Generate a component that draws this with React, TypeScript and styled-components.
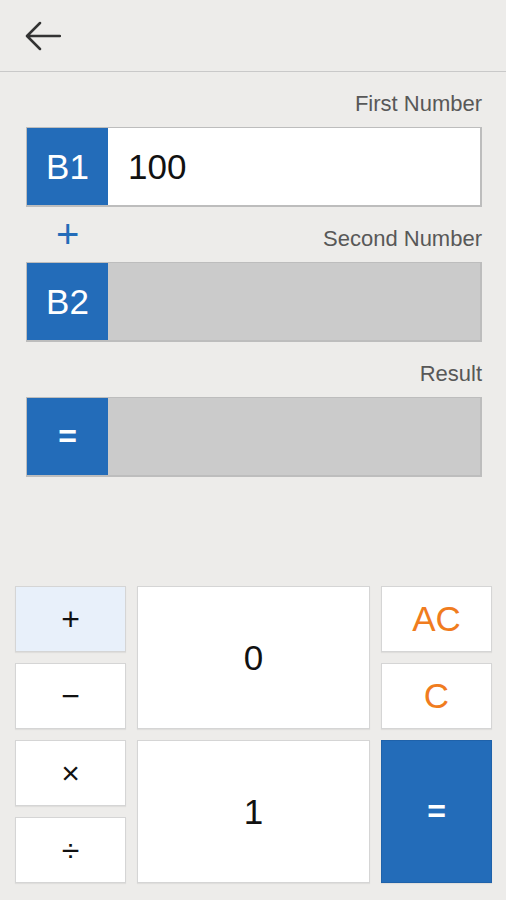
import React from "react";
import styled, { createGlobalStyle } from "styled-components";

const Global = createGlobalStyle`
  html, body { margin: 0; padding: 0; }
  body {
    background: #edecea;
    font-family: "Liberation Sans", Arial, sans-serif;
  }
  * { box-sizing: border-box; }
`;

const BLUE = "#236cb9";

const Page = styled.div`
  display: flex;
  flex-direction: column;
  min-height: 900px;
  background: #edecea;
`;

const Header = styled.header`
  height: 72px;
  border-bottom: 1px solid #c9c9c9;
  display: flex;
  align-items: center;
  padding-left: 25px;
`;

const BackButton = styled.button`
  border: 0;
  background: transparent;
  padding: 0;
  margin: 0;
  width: 36px;
  height: 30px;
  display: flex;
  cursor: pointer;
`;

const Form = styled.section`
  padding: 0 24px 0 26px;
  display: flex;
  flex-direction: column;
`;

const LabelRow = styled.div`
  height: 43px;
  margin-bottom: 12px;
  display: flex;
  align-items: flex-end;
  justify-content: space-between;
`;

const Label = styled.span`
  margin-left: auto;
  font-size: 22px;
  line-height: 23px;
  color: #585858;
`;

const OpMark = styled.span`
  font-size: 40px;
  line-height: 40px;
  color: ${BLUE};
  margin-left: 30px;
  margin-bottom: -4px;
`;

const Field = styled.div<{ $filled?: boolean }>`
  height: 80px;
  display: flex;
  border: 1px solid #bdbdbd;
  border-right-width: 2px;
  border-bottom-width: 2px;
  background: ${(p) => (p.$filled ? "#ffffff" : "#cbcbcb")};
`;

const Tag = styled.div<{ $bold?: boolean }>`
  width: 81px;
  flex: none;
  background: ${BLUE};
  color: #ffffff;
  display: flex;
  align-items: center;
  justify-content: center;
  font-size: ${(p) => (p.$bold ? "32px" : "35px")};
  font-weight: ${(p) => (p.$bold ? 700 : 400)};
`;

const Value = styled.div`
  flex: 1;
  display: flex;
  align-items: center;
  padding-left: 20px;
  font-size: 35px;
  color: #111111;
`;

const Keypad = styled.div`
  margin-top: auto;
  padding: 0 14px 17px 15px;
  display: grid;
  grid-template-columns: 111px 1fr 111px;
  grid-template-rows: repeat(4, 66px);
  gap: 11px;
`;

const Key = styled.button<{
  $tone?: "plain" | "active" | "accent" | "primary";
  $size?: number;
  $span?: number;
  $col?: number;
  $row?: number;
}>`
  grid-column: ${(p) => p.$col ?? "auto"};
  grid-row: ${(p) => (p.$row ? `${p.$row} / span ${p.$span ?? 1}` : "auto")};
  margin: 0;
  padding: 0;
  border: 1px solid ${(p) => (p.$tone === "primary" ? "#1f62aa" : "#d5d5d5")};
  box-shadow: 0 1px 1px rgba(0, 0, 0, 0.06);
  background: ${(p) =>
    p.$tone === "active" ? "#e8f0fa" : p.$tone === "primary" ? BLUE : "#ffffff"};
  color: ${(p) =>
    p.$tone === "accent" ? "#f07c1e" : p.$tone === "primary" ? "#ffffff" : "#111111"};
  font-family: "Liberation Sans", Arial, sans-serif;
  font-size: ${(p) => p.$size ?? 32}px;
  font-weight: ${(p) => (p.$tone === "primary" ? 700 : 400)};
  display: flex;
  align-items: center;
  justify-content: center;
  cursor: pointer;
`;

function BackArrow() {
  return (
    <svg width="36" height="30" viewBox="0 0 36 30" fill="none">
      <path
        d="M35 15H2.5M15 2L2 15l13 13"
        stroke="#333333"
        strokeWidth="2.5"
        strokeLinecap="round"
        strokeLinejoin="round"
      />
    </svg>
  );
}

export default function App() {
  return (
    <Page>
      <Global />
      <Header>
        <BackButton aria-label="Back">
          <BackArrow />
        </BackButton>
      </Header>
      <Form>
        <LabelRow>
          <Label>First Number</Label>
        </LabelRow>
        <Field $filled>
          <Tag>B1</Tag>
          <Value>100</Value>
        </Field>
        <LabelRow>
          <OpMark>+</OpMark>
          <Label>Second Number</Label>
        </LabelRow>
        <Field>
          <Tag>B2</Tag>
          <Value />
        </Field>
        <LabelRow>
          <Label>Result</Label>
        </LabelRow>
        <Field>
          <Tag $bold>=</Tag>
          <Value />
        </Field>
      </Form>
      <Keypad>
        <Key $tone="active" $col={1} $row={1}>+</Key>
        <Key $col={2} $row={1} $span={2} $size={35}>0</Key>
        <Key $tone="accent" $col={3} $row={1} $size={35}>AC</Key>
        <Key $col={1} $row={2}>−</Key>
        <Key $tone="accent" $col={3} $row={2} $size={35}>C</Key>
        <Key $col={1} $row={3}>×</Key>
        <Key $col={2} $row={3} $span={2} $size={35}>1</Key>
        <Key $tone="primary" $col={3} $row={3} $span={2} $size={32}>=</Key>
        <Key $col={1} $row={4}>÷</Key>
      </Keypad>
    </Page>
  );
}
